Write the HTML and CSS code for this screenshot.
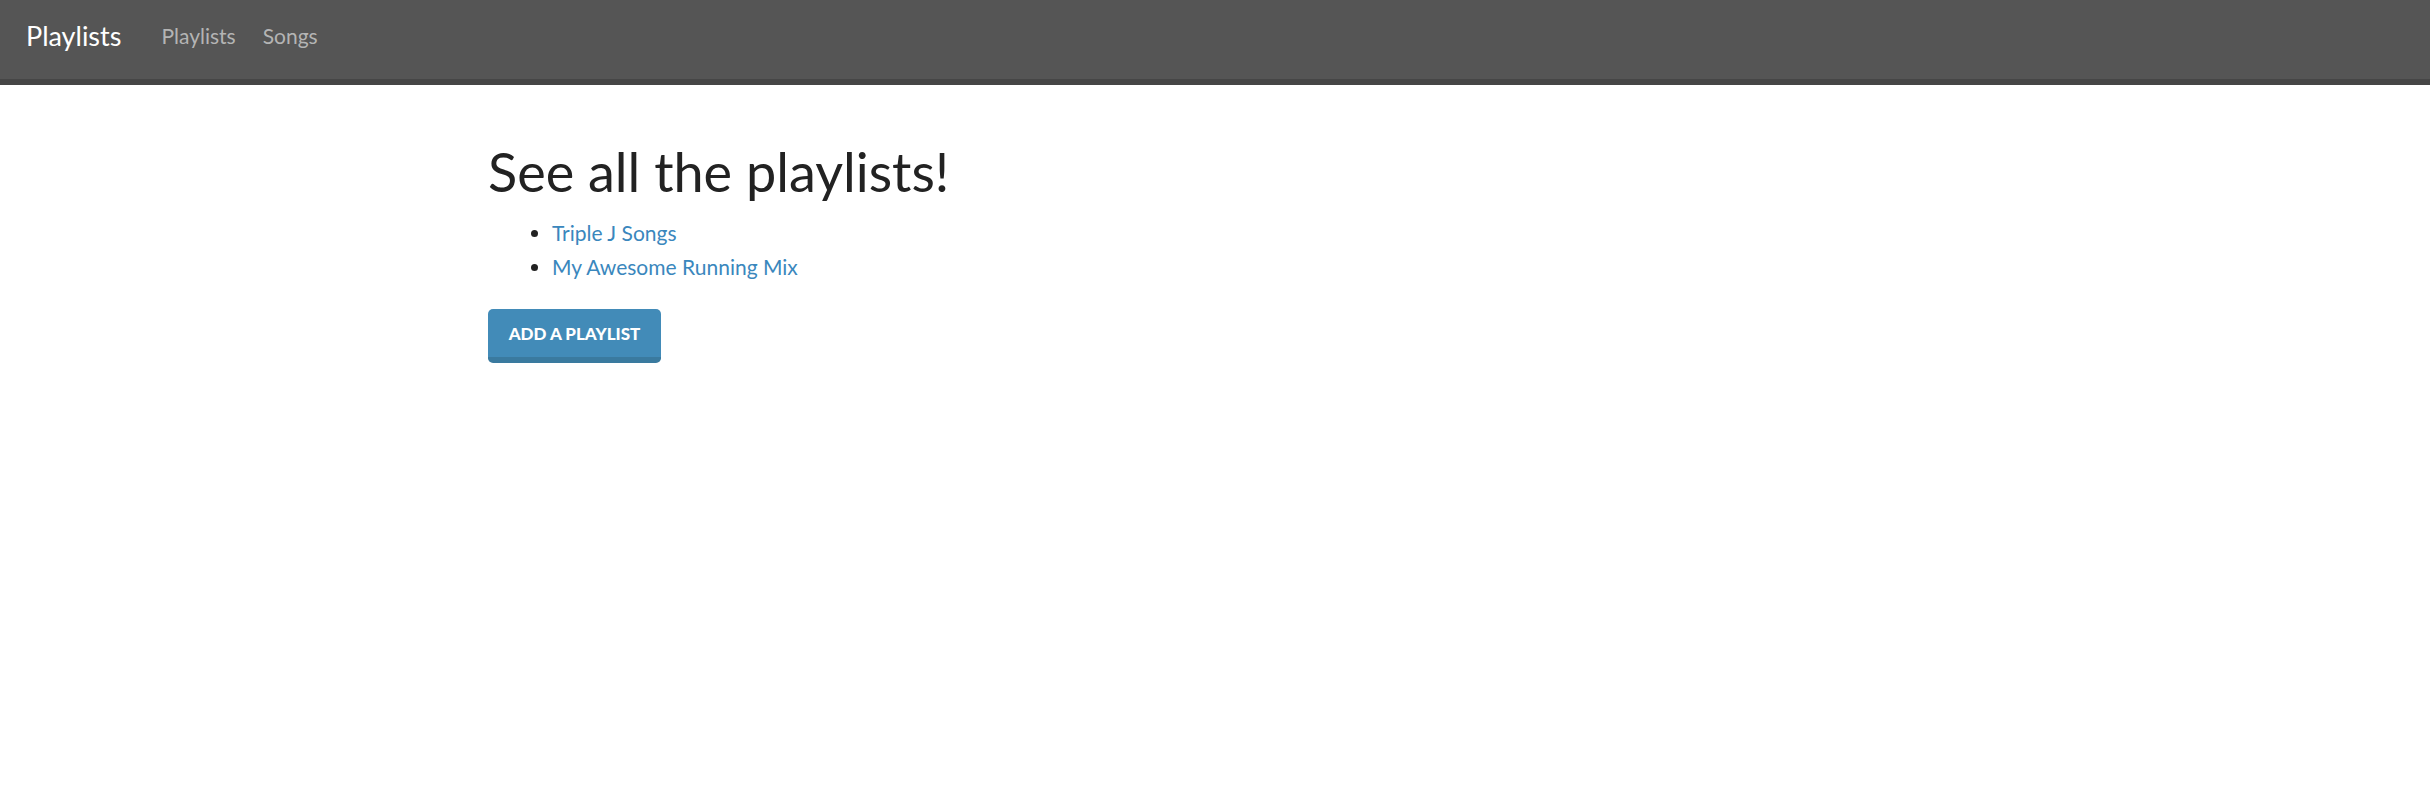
FILE: index.html
```html
<!DOCTYPE html>
<html lang="en">
<head>
<meta charset="utf-8">
<title>Playlists</title>
<link rel="stylesheet" href="styles.css">
</head>
<body>
<nav class="navbar">
  <a class="brand" href="#">Playlists</a>
  <ul class="nav">
    <li><a href="#">Playlists</a></li>
    <li><a href="#">Songs</a></li>
  </ul>
</nav>
<main class="container">
  <h1 class="title">See all the playlists!</h1>
  <ul class="list">
    <li><a href="#">Triple J Songs</a></li>
    <li><a href="#">My Awesome Running Mix</a></li>
  </ul>
  <a class="btn" href="#">ADD A PLAYLIST</a>
</main>
</body>
</html>
```
FILE: styles.css
```css
* { box-sizing: border-box; }
html, body { margin: 0; padding: 0; }
body {
  font-family: Lato, "Liberation Sans", sans-serif;
  color: #222;
  background: #fff;
  font-size: 21px;
}
a { text-decoration: none; }
.navbar {
  height: 85px;
  background: #555;
  border-bottom: 6px solid #464646;
  display: flex;
  align-items: center;
  padding: 0 0 8px 26px;
}
.brand {
  color: #fff;
  font-size: 27px;
  margin-right: 40px;
}
.nav {
  list-style: none;
  margin: 0;
  padding: 0;
  display: flex;
  gap: 27px;
}
.nav a {
  color: #b4b4b4;
  font-size: 21px;
}
.container {
  width: 1454px;
  margin: 0 auto;
  padding-top: 56px;
}
.title {
  font-size: 54px;
  font-weight: 400;
  line-height: 61px;
  margin: 0 0 14px 0;
  color: #222;
}
.list {
  margin: 0 0 25px 0;
  padding-left: 64px;
  line-height: 34px;
}
.list a { color: #3a87bd; }
.btn {
  display: inline-flex;
  align-items: center;
  justify-content: center;
  width: 173px;
  height: 54px;
  background: #428bb8;
  border-bottom: 6px solid #3a7a9f;
  border-radius: 5px;
  color: #fff;
  font-weight: 900;
  font-size: 17px;
}
```
